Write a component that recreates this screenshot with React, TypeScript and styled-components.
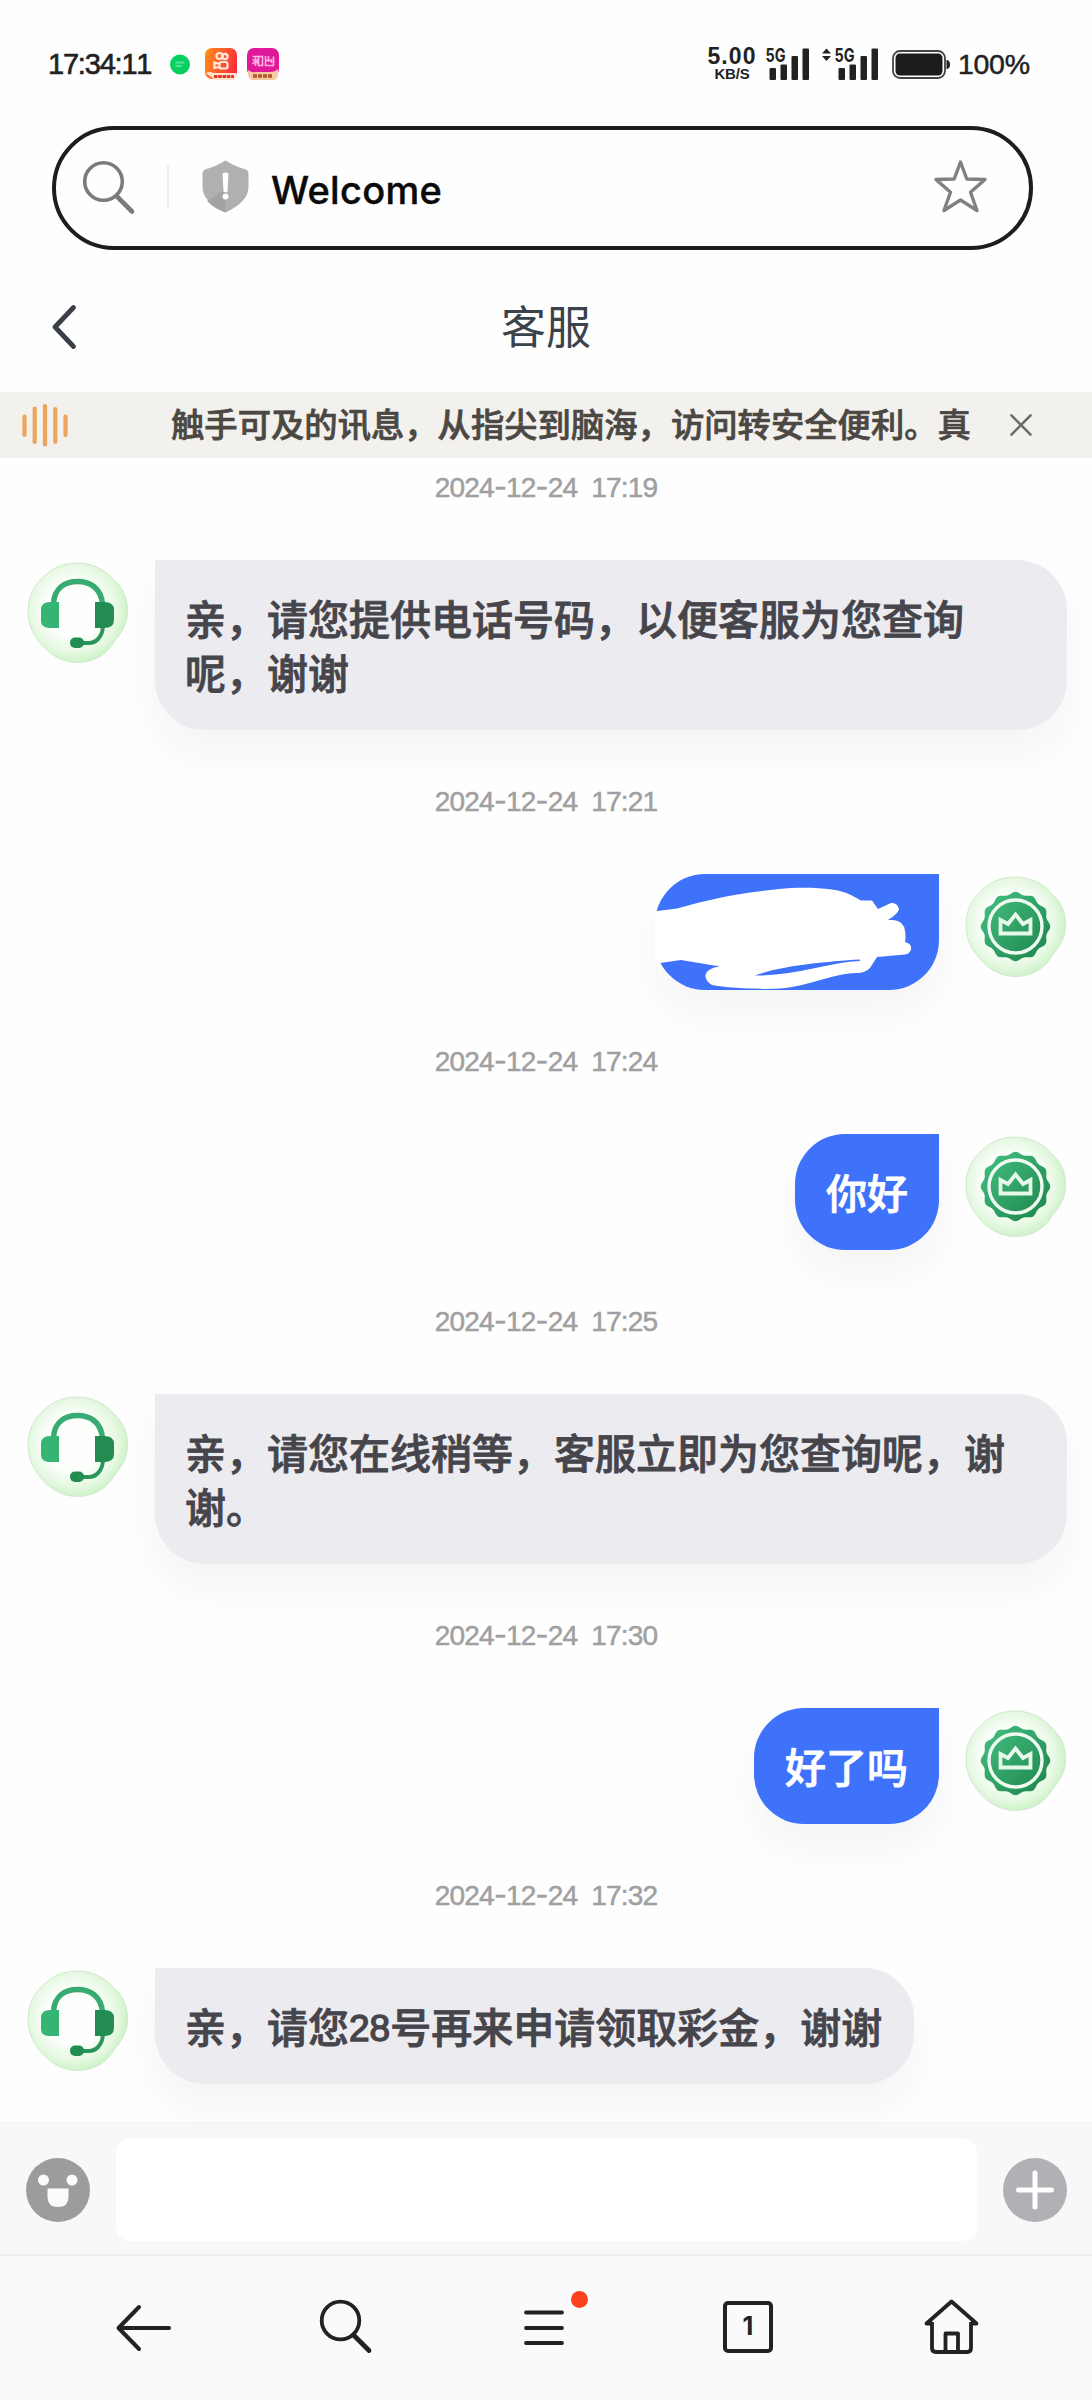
import React from "react";
import styled, { createGlobalStyle } from "styled-components";

const latin = `Inter, "Liberation Sans", "Noto Sans CJK SC", sans-serif`;
const grotesk = `"Liberation Sans", "Noto Sans CJK SC", sans-serif`;
const cjk = `"Noto Sans CJK SC", sans-serif`;

const Global = createGlobalStyle`
  * { box-sizing: border-box; }
  html, body { margin: 0; padding: 0; background: #fefefe; }
  svg { display: block; flex: none; overflow: visible; }
  button { border: 0; padding: 0; background: none; font: inherit; color: inherit; }
`;

const Phone = styled.div`
  width: 1092px;
  height: 2400px;
  display: flex;
  flex-direction: column;
  overflow: hidden;
  background: #fefefe;
  font-family: ${latin};
`;

const StatusBar = styled.header`
  height: 126px;
  flex: none;
  display: flex;
  align-items: flex-start;
  padding: 48px 62px 0 48px;
  color: #222;
`;

const Clock = styled.time`
  width: 122px;
  font-family: ${grotesk};
  font-size: 29px;
  font-kerning: none;
  line-height: 33px;
  letter-spacing: -1.2px;
  white-space: nowrap;
  -webkit-text-stroke: 0.6px #222;
`;

const AppIcons = styled.div`
  display: flex;
  align-items: center;
  height: 32px;
  gap: 10px;
`;

const Spacer = styled.div`
  flex: 1;
`;

const Speed = styled.div`
  width: 50px;
  margin-right: 9px;
  display: flex;
  flex-direction: column;
  align-items: center;
  white-space: nowrap;
  font-family: ${grotesk};
  font-weight: 700;
`;

const SpeedValue = styled.span`
  font-size: 23px;
  line-height: 17px;
  letter-spacing: 1.1px;
`;

const SpeedUnit = styled.span`
  font-size: 15px;
  line-height: 17px;
  letter-spacing: -0.2px;
`;

const Percent = styled.span`
  width: 72px;
  margin-left: 7px;
  font-family: ${grotesk};
  font-size: 28.5px;
  font-kerning: none;
  letter-spacing: -0.3px;
  line-height: 33px;
  white-space: nowrap;
  -webkit-text-stroke: 0.5px #222;
`;

const AddressBar = styled.div`
  flex: none;
  width: 981px;
  height: 124px;
  margin-left: 52px;
  border: 4px solid #1d1d1d;
  border-radius: 62px;
  display: flex;
  align-items: center;
  padding: 0 42px 3px 26px;
`;

const Divider = styled.div`
  width: 2px;
  height: 42px;
  margin: 0 33px 0 31px;
  background: #ebebeb;
`;

const Address = styled.span`
  flex: 1;
  margin-left: 22px;
  padding-top: 6px;
  font-size: 38px;
  font-weight: 500;
  line-height: 46px;
  letter-spacing: 0.3px;
  color: #0a0a0a;
  -webkit-text-stroke: 0.4px #0a0a0a;
`;

const TitleBar = styled.div`
  flex: none;
  height: 142px;
  display: grid;
  grid-template-columns: 120px 1fr 120px;
  align-items: center;
  padding-top: 12px;
`;

const BackButton = styled.button`
  padding-left: 51px;
`;

const Title = styled.h1`
  margin: 0;
  padding-bottom: 4px;
  text-align: center;
  font-family: ${cjk};
  font-size: 45px;
  font-weight: 400;
  line-height: 60px;
  color: #3c424a;
`;

const Notice = styled.div`
  flex: none;
  height: 66px;
  display: flex;
  align-items: center;
  background: #f3f1ee;
  padding: 0 60px 0 22px;
`;

const NoticeText = styled.p`
  flex: 1;
  margin: 0 0 0 103px;
  padding-bottom: 4px;
  font-family: ${cjk};
  font-size: 33.35px;
  font-weight: 500;
  line-height: 48px;
  color: #4b4843;
  white-space: nowrap;
  -webkit-text-stroke: 0.7px #4b4843;
`;

const Chat = styled.main`
  flex: none;
  height: 1664px;
  padding-top: 10px;
  overflow: hidden;
`;

const StampLine = styled.div`
  height: 40px;
  line-height: 39px;
  text-align: center;
  font-family: ${grotesk};
  font-size: 28px;
  font-kerning: none;
  letter-spacing: -0.8px;
  color: #a0a0a0;
  white-space: pre;
  -webkit-text-stroke: 0.5px #a0a0a0;
`;

const Dash = styled.span`
  font-family: Inter;
`;

const Row = styled.div<{ $mine?: boolean }>`
  display: flex;
  flex-direction: ${(p) => (p.$mine ? "row-reverse" : "row")};
  align-items: flex-start;
  gap: 26px;
  margin: 52px 25px 52px 27px;
`;

const AvatarFrame = styled.div`
  flex: none;
  width: 102px;
  padding-top: 2px;
`;

const Bubble = styled.div<{ $mine?: boolean }>`
  max-width: 912px;
  padding: ${(p) => (p.$mine ? "30px 31px 32px 31px" : "30px 32px 32px 30px")};
  font-family: ${cjk};
  font-size: 41px;
  font-weight: 500;
  line-height: 54px;
  color: ${(p) => (p.$mine ? "#fff" : "#46454b")};
  -webkit-text-stroke: 0.8px ${(p) => (p.$mine ? "#fff" : "#46454b")};
  background: ${(p) => (p.$mine ? "#3f72fb" : "#ebebf0")};
  border-radius: ${(p) => (p.$mine ? "50px 0 50px 50px" : "0 50px 50px 50px")};
  box-shadow: 0 24px 40px rgba(40, 40, 60, 0.045);
`;

const Digits = styled.span`
  font-family: ${grotesk};
  font-size: 37px;
  line-height: 1;
  vertical-align: 2px;
  -webkit-text-stroke: 1.4px #46454b;
`;

const ScribbledBubble = styled(Bubble)`
  width: 284px;
  height: 116px;
  padding: 0;
`;

const Composer = styled.div`
  flex: none;
  height: 132px;
  display: flex;
  align-items: center;
  gap: 26px;
  padding: 2px 25px 0 26px;
  background: #f8f8f8;
  border-top: 2px solid #f4f4f4;
`;

const MessageInput = styled.input`
  flex: 1;
  min-width: 0;
  height: 102px;
  border: 0;
  border-radius: 14px;
  background: #fff;
`;

const Nav = styled.nav`
  flex: 1;
  display: grid;
  grid-template-columns: 204px 205px 199px 201px 56px;
  align-items: start;
  border-top: 2px solid #eee;
  background: #fafafa;
  padding: 43px 0 0 115px;
`;

const MenuBox = styled.div`
  position: relative;
  width: 40px;
`;

const Dot = styled.i`
  position: absolute;
  right: -24px;
  top: -8px;
  width: 17px;
  height: 17px;
  border-radius: 50%;
  background: #fd4220;
`;

const Tabs = styled.div`
  width: 50px;
  height: 52px;
  margin-top: 2px;
  border: 4px solid #222;
  border-radius: 5px;
  text-align: center;
  font-size: 25px;
  font-weight: 700;
  line-height: 43px;
  color: #222;
`;

const Signal = ({ updown }: { updown?: boolean }) => (
  <svg width={updown ? 57 : 43} height="32" viewBox={updown ? "-14 0 57 32" : "0 0 43 32"} fill="#222">
    {updown && <path d="M-13 5.5 L-8.500 0.500 L-4 5.500Z M-13 8 L-4 8 L-8.500 13Z" />}
    <text x="-0.500" y="14" fontSize="19" fontWeight="700" fontFamily="Inter" textLength="20" lengthAdjust="spacingAndGlyphs">5G</text>
    <rect x="3.500" y="20" width="6.500" height="12" rx="1" />
    <rect x="14.500" y="16.500" width="6.500" height="15.500" rx="1" />
    <rect x="25.500" y="8" width="6.500" height="24" rx="1" />
    <rect x="36.500" y="0.500" width="6.500" height="31.500" rx="1" />
  </svg>
);

const Battery = () => (
  <BatteryIcon width="59" height="30" viewBox="0 0 59 30">
    <rect x="1" y="1" width="52" height="27" rx="7" fill="#fff" stroke="#444" strokeWidth="1.800" />
    <rect x="3.500" y="3.500" width="47" height="22" rx="4.500" fill="#1c1c1c" />
    <path d="M54.500 10 h1 q2.500 1 2.500 4.500 t-2.500 4.500 h-1z" fill="#222" />
  </BatteryIcon>
);

const BatteryIcon = styled.svg`
  margin: 2px 0 0 14px;
`;

const ChatDotIcon = styled.svg`
  margin-right: 5px;
`;

const ChatDot = () => (
  <ChatDotIcon width="20" height="21" viewBox="0 0 20 21">
    <circle cx="10" cy="10.500" r="10" fill="#08cf5f" />
    <path d="M5.500 8.500h9M5.500 12h6" stroke="#55e493" strokeWidth="1.800" />
  </ChatDotIcon>
);

const VideoApp = () => (
  <svg width="32" height="32" viewBox="0 0 32 32">
    <defs>
      <linearGradient id="kw" x1="0" x2="1" y1="0.300" y2="0.600">
        <stop offset="0" stopColor="#ff8a1c" />
        <stop offset="1" stopColor="#ff2b3c" />
      </linearGradient>
    </defs>
    <rect width="32" height="31" rx="7" fill="url(#kw)" />
    <g fill="none" stroke="#ffeadd" strokeWidth="2.200">
      <circle cx="14.500" cy="8" r="3" />
      <circle cx="20" cy="8.500" r="2.600" />
      <rect x="14.500" y="14" width="8" height="6.500" rx="2" />
      <path d="M14.500 16l-5-1.500v5.500L14.500 19" />
    </g>
    <path d="M1 25q5-2 7 0h23l1 2-3 5H10z" fill="#ffe3cc" />
    <path d="M9 28.500h20" stroke="#e8322c" strokeWidth="3" strokeDasharray="3.500 0.800" />
  </svg>
);

const ShortsApp = () => (
  <svg width="32" height="32" viewBox="0 0 32 32">
    <rect width="32" height="28" rx="7" fill="#e0189a" />
    <g fill="none" stroke="#ffb3e2" strokeWidth="1.600">
      <path d="M5.500 8.500h6M5.500 12h6M8.500 8v10M5.500 16l3-3M11.500 16l-2-3" />
      <rect x="11.500" y="8.500" width="4" height="9" />
      <path d="M18.500 8v9.500h8V8.500M21.500 8v6M18.500 12.500h5M24.500 11v4" />
    </g>
    <path d="M1 22q4 3 8 2h14q5 0 8-3v6q-1 5-5 5H6q-4 0-5-5z" fill="#f6c9a0" />
    <path d="M6 28h20" stroke="#b0562e" strokeWidth="3.500" strokeDasharray="4 1" />
  </svg>
);

const Magnifier = ({ color, width }: { color: string; width: number }) => (
  <svg width="54" height="54" viewBox="0 0 54 54" fill="none" stroke={color} strokeWidth={width} strokeLinecap="round">
    <circle cx="21.500" cy="21.500" r="18.800" />
    <path d="M34.500 36 L50 51.500" strokeWidth={width + 1} />
  </svg>
);

const Shield = () => (
  <svg width="47" height="53" viewBox="0 0 47 53">
    <path d="M23.500 0.500Q33 6.500 44 9.500q2.500 1 2.500 4v14Q46 42 23.500 52.500 1 42 0.500 27.500v-14q0-3 2.500-4Q14 6.500 23.500 0.500z" fill="#b0b0b0" />
    <path d="M23.500 29.500 L5 41Q12 48.500 23.500 52.500z" fill="#a3a3a3" />
    <path d="M20.500 13.500q3-2 6 0l-1 18q-2 2-4 0z" fill="#fff" />
    <circle cx="23.500" cy="36.500" r="3" fill="#fff" />
  </svg>
);

const Star = () => (
  <svg width="53" height="53" viewBox="0 0 53 53" fill="none" stroke="#808080" strokeWidth="3.400" strokeLinejoin="round">
    <path d="M26.500 2 L32.800 19 L51 19.500 L36.500 32.300 L43 50.500 L26.500 40 L10 50.500 L16.500 32.300 L2 19.500 L20.200 19Z" />
  </svg>
);

const Wave = () => (
  <svg width="46" height="44" viewBox="0 0 46 44" stroke="#eda45c" strokeWidth="4.200" strokeLinecap="round">
    <path d="M2.500 13.500V32M12.700 5.500V39M23 3V41.500M33.300 6V39M43.500 13.500V32" />
  </svg>
);

const Halo = ({ id }: { id: string }) => (
  <>
    <defs>
      <radialGradient id={id} cx="0.460" cy="0.460" r="0.560">
        <stop offset="0.500" stopColor="#fdfffd" />
        <stop offset="0.800" stopColor="#e4f8e0" />
        <stop offset="1" stopColor="#caf1c4" />
      </radialGradient>
      <linearGradient id={id + "g"} x1="0" y1="0" x2="1" y2="1">
        <stop offset="0" stopColor="#45c283" />
        <stop offset="1" stopColor="#1c824a" />
      </linearGradient>
    </defs>
    <path
      d="M50 1C66 1 79 8 87 18C97 27 101 38 100.500 50C100.500 62 95 70 87 80C79 94 65 100.500 50 100.500C35 100.500 21 92 12.500 80C4 70 1 60 1 48C1.500 34 6 25 15 16C25 6 36 1 50 1z"
      fill={`url(#${id})`}
      stroke="#d3e8d0"
      strokeWidth="1"
    />
  </>
);

const AgentAvatar = ({ id }: { id: string }) => (
  <svg width="102" height="102" viewBox="0 0 102 102">
    <Halo id={id} />
    <path d="M26.500 42C27 26 38 19.500 50.500 19.500S74 26 75.500 42" fill="none" stroke="#38ab72" strokeWidth="5.500" />
    <path d="M76 64C75.500 76 68 81 62 81H50" fill="none" stroke="#2a965c" strokeWidth="4" />
    <path d="M23 40h9v26h-9q-9 0-9-7V48q0-8 9-8z" fill="#36b471" />
    <path d="M68 40h9q10 0 10 8v10q0 8-10 8h-9z" fill="#238c50" />
    <rect x="43" y="75.500" width="14" height="10.500" rx="5" fill="#238c50" />
  </svg>
);

const sealPath = Array.from({ length: 96 }, (_, i) => {
  const turn = (i / 96) * Math.PI * 2;
  const angle = turn - Math.PI / 2;
  const r = 33.4 + 1.4 * Math.cos(turn * 12);
  return `${i ? "L" : "M"}${(50.5 + r * Math.cos(angle)).toFixed(2)} ${(50.5 + r * Math.sin(angle)).toFixed(2)}`;
}).join("") + "Z";

const MemberAvatar = ({ id }: { id: string }) => (
  <svg width="102" height="102" viewBox="0 0 102 102">
    <Halo id={id} />
    <path d={sealPath} fill={`url(#${id}g)`} />
    <circle cx="50.500" cy="50.500" r="26.500" fill="none" stroke="#effbf0" strokeWidth="3.400" />
    <path d="M35.500 44 L43 48 L50.500 38.500 L58 48 L65.500 44 V57.500 H35.500Z" fill="none" stroke="#e6f8e9" strokeWidth="3.800" />
  </svg>
);

const ScribbleArt = styled.svg`
  && { overflow: hidden; }
`;

const Scribble = () => (
  <ScribbleArt width="284" height="116" viewBox="0 0 284 116" fill="#fff">
    <path d="M-1 37.500L22 34.500L44 28.500C75 21 95 18 124 15C150 12 185 14 196 21L206 26.500H217L223 35L236 29Q242 28 244 35Q243 40 233 46H238Q249 47 250 57Q251 62 250 68Q257 70 256 75Q255 80 250 80.500L222 83L215 94Q210 99 202 99C175 100 155 112 125 114.500C100 116 65 113 57 111Q50 107 50.500 101Q52 94 65 92.500L26 86L5 89H-1Z" />
    <path d="M100 101.500C125 92 170 87.500 205 85.500V87C175 88 140 102 100 101.500Z" fill="#3f72fb" />
  </ScribbleArt>
);

const Stamp = ({ value }: { value: string }) => (
  <StampLine>
    {value.split(/(-)/).map((part, i) => (part === "-" ? <Dash key={i}>-</Dash> : part))}
  </StampLine>
);

const MessageText = ({ value }: { value: string }) => (
  <>{value.split(/(\d+)/).map((part, i) => (/^\d+$/.test(part) ? <Digits key={i}>{part}</Digits> : part))}</>
);

const messages = [
  { time: "2024-12-24  17:19", text: "亲，请您提供电话号码，以便客服为您查询呢，谢谢" },
  { time: "2024-12-24  17:21", mine: true, hidden: true },
  { time: "2024-12-24  17:24", mine: true, text: "你好" },
  { time: "2024-12-24  17:25", text: "亲，请您在线稍等，客服立即为您查询呢，谢谢。" },
  { time: "2024-12-24  17:30", mine: true, text: "好了吗" },
  { time: "2024-12-24  17:32", text: "亲，请您28号再来申请领取彩金，谢谢" },
];

const Signals = styled.div`
  display: flex;
  gap: 12px;
`;

export default function App() {
  return (
    <Phone>
      <Global />
      <StatusBar>
        <Clock>17:34:11</Clock>
        <AppIcons>
          <ChatDot />
          <VideoApp />
          <ShortsApp />
        </AppIcons>
        <Spacer />
        <Speed>
          <SpeedValue>5.00</SpeedValue>
          <SpeedUnit>KB/S</SpeedUnit>
        </Speed>
        <Signals>
          <Signal />
          <Signal updown />
        </Signals>
        <Battery />
        <Percent>100%</Percent>
      </StatusBar>

      <AddressBar>
        <Magnifier color="#7b7b7b" width={3.6} />
        <Divider />
        <Shield />
        <Address>Welcome</Address>
        <Star />
      </AddressBar>

      <TitleBar>
        <BackButton>
          <svg width="26" height="46" viewBox="0 0 26 46" fill="none" stroke="#3a3f46" strokeWidth="4.800" strokeLinecap="round" strokeLinejoin="round">
            <path d="M22.500 3.500 L4 23 L22.500 42.500" />
          </svg>
        </BackButton>
        <Title>客服</Title>
      </TitleBar>

      <Notice>
        <Wave />
        <NoticeText>触手可及的讯息，从指尖到脑海，访问转安全便利。真</NoticeText>
        <svg width="22" height="22" viewBox="0 0 23 23" stroke="#6c6a67" strokeWidth="2.600" strokeLinecap="round">
          <path d="M1.500 1.500 L21.500 21.500 M21.500 1.500 L1.500 21.500" />
        </svg>
      </Notice>

      <Chat>
        {messages.map((m, i) => (
          <React.Fragment key={m.time}>
            <Stamp value={m.time} />
            <Row $mine={m.mine}>
              <AvatarFrame>{m.mine ? <MemberAvatar id={`a${i}`} /> : <AgentAvatar id={`a${i}`} />}</AvatarFrame>
              {m.hidden ? (
                <ScribbledBubble $mine>
                  <Scribble />
                </ScribbledBubble>
              ) : (
                <Bubble $mine={m.mine}>
                  <MessageText value={m.text ?? ""} />
                </Bubble>
              )}
            </Row>
          </React.Fragment>
        ))}
      </Chat>

      <Composer>
        <svg width="64" height="64" viewBox="0 0 64 64">
          <circle cx="32" cy="32" r="32" fill="#9c9c9c" />
          <circle cx="17.500" cy="22" r="5.500" fill="#fbfbfb" />
          <circle cx="46" cy="22" r="5.500" fill="#fbfbfb" />
          <path d="M21.500 30.500h21v8.500q0 10-10.500 10t-10.500-10z" fill="#fbfbfb" />
        </svg>
        <MessageInput aria-label="message" />
        <svg width="64" height="64" viewBox="0 0 64 64">
          <circle cx="32" cy="32" r="32" fill="#b0b0b5" />
          <path d="M32 15v34M15.500 32h33" stroke="#fff" strokeWidth="5" strokeLinecap="round" />
        </svg>
      </Composer>

      <Nav>
        <svg width="57" height="58" viewBox="0 0 57 58" fill="none" stroke="#222" strokeWidth="4" strokeLinecap="round" strokeLinejoin="round">
          <path d="M54 29H4 M24 8 L3.500 29 L24 50" />
        </svg>
        <Magnifier color="#222" width={3.8} />
        <MenuBox>
          <svg width="40" height="58" viewBox="0 0 40 58" stroke="#222" strokeWidth="3.800" strokeLinecap="round">
            <path d="M2 13.500H38M2 29H38M2 44H38" />
          </svg>
          <Dot />
        </MenuBox>
        <Tabs>1</Tabs>
        <svg width="56" height="56" viewBox="0 0 56 56" fill="none" stroke="#222" strokeWidth="3.800" strokeLinejoin="round">
          <path d="M8 23V49q0 4 4 4H43q4 0 4-4V23" />
          <path d="M8 24.500H2.500 L27.500 2.500 L52.500 24.500H47" />
          <path d="M21.500 53V34.500H34V53" />
        </svg>
      </Nav>
    </Phone>
  );
}
